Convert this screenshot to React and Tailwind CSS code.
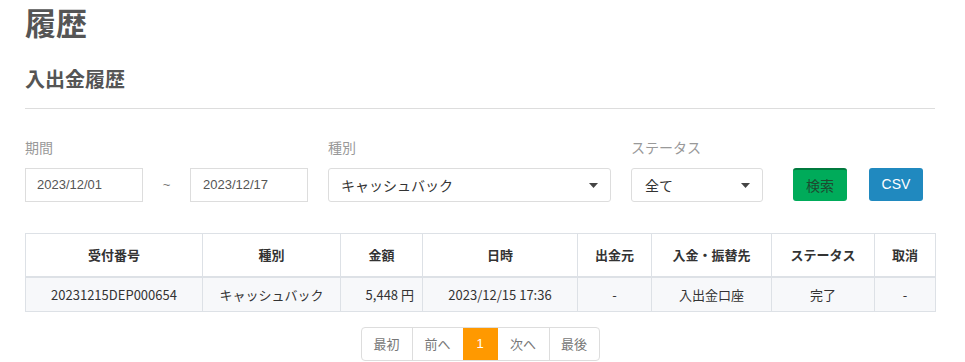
import React from "react";

const jp = { fontFamily: '"Noto Sans CJK JP", "Noto Sans", sans-serif' };
const latin = { fontFamily: '"Liberation Sans", "Noto Sans CJK JP", sans-serif' };

function Caret() {
  return (
    <svg width="9" height="5" viewBox="0 0 9 5" className="shrink-0">
      <path d="M0 0h9L4.5 5z" fill="#444" />
    </svg>
  );
}

const cols = [
  { label: "受付番号", w: "w-[177px]" },
  { label: "種別", w: "w-[138px]" },
  { label: "金額", w: "w-[82px]" },
  { label: "日時", w: "w-[155px]" },
  { label: "出金元", w: "w-[74px]" },
  { label: "入金・振替先", w: "w-[120px]" },
  { label: "ステータス", w: "w-[103px]" },
  { label: "取消", w: "w-[61px]" },
];

const rows = [
  ["20231215DEP000654", "キャッシュバック", "5,448 円", "2023/12/15 17:36", "-", "入出金口座", "完了", "-"],
];

export default function App() {
  return (
    <div className="w-[965px] h-[362px] overflow-hidden bg-white pl-[25px]" style={jp}>
      <div className="w-[910px]">
        <h1 className="text-[31px] leading-[44px] font-bold text-[#555]">履歴</h1>
        <h2 className="mt-[22px] text-[20px] leading-[26px] font-bold text-[#555] pb-[16px] border-b border-[#ddd]">入出金履歴</h2>

        <div className="mt-[28px] flex items-end">
          <div className="w-[303px] shrink-0">
            <p className="text-[14px] leading-[20px] text-[#999] mb-[11px]">期間</p>
            <div className="flex items-center">
              <div className="w-[118px] h-[34px] border border-[#ddd] flex items-center pl-[11px] text-[13px] text-[#555]" style={latin}>2023/12/01</div>
              <span className="w-[47px] text-center text-[13px] text-[#777]" style={latin}>~</span>
              <div className="w-[118px] h-[34px] border border-[#ddd] flex items-center pl-[12px] text-[13px] text-[#555]" style={latin}>2023/12/17</div>
            </div>
          </div>
          <div className="w-[303px] shrink-0">
            <p className="text-[14px] leading-[20px] text-[#999] mb-[11px]">種別</p>
            <div className="w-[283px] h-[34px] border border-[#ddd] rounded-[3px] flex items-center justify-between pl-[12px] pr-[12px] text-[14px] text-[#333]">
              <span>キャッシュバック</span>
              <Caret />
            </div>
          </div>
          <div className="w-[162px] shrink-0">
            <p className="text-[14px] leading-[20px] text-[#999] mb-[11px]">ステータス</p>
            <div className="w-[132px] h-[34px] border border-[#ddd] rounded-[3px] flex items-center justify-between pl-[13px] pr-[12px] text-[14px] text-[#333]">
              <span>全て</span>
              <Caret />
            </div>
          </div>
          <button className="w-[54px] h-[33px] mb-[1px] rounded-[3px] bg-[#00ab5a] border-t-2 border-[#007a3e] text-[14px] text-[#1e4a30]">検索</button>
          <button className="ml-[22px] w-[54px] h-[33px] mb-[1px] rounded-[3px] bg-[#2089bf] text-[14px] text-white" style={latin}>CSV</button>
        </div>

        <table className="mt-[31px] w-[910px] border-collapse table-fixed text-[13px] text-[#333]">
          <thead>
            <tr className="h-[43px] border-b-2 border-[#dde1e6]">
              {cols.map((c) => (
                <th key={c.label} className={`${c.w} border border-[#dde1e6] font-bold text-center`}>{c.label}</th>
              ))}
            </tr>
          </thead>
          <tbody>
            {rows.map((r, i) => (
              <tr key={i} className="h-[35px] bg-[#f7f8fa]">
                {r.map((cell, j) => (
                  <td key={j} className={`border border-[#dde1e6] ${j === 2 ? "text-right pr-[8px]" : "text-center"}`}>{cell}</td>
                ))}
              </tr>
            ))}
          </tbody>
        </table>

        <div className="mt-[15px] flex justify-center">
          <div className="flex h-[34px] border border-[#ddd] rounded-[4px] overflow-hidden text-[13px] text-[#777]">
            <span className="w-[50px] flex items-center justify-center">最初</span>
            <span className="w-[51px] flex items-center justify-center border-l border-[#ddd]">前へ</span>
            <span className="w-[35px] flex items-center justify-center bg-[#ff9900] text-white" style={latin}>1</span>
            <span className="w-[51px] flex items-center justify-center">次へ</span>
            <span className="w-[50px] flex items-center justify-center border-l border-[#ddd]">最後</span>
          </div>
        </div>
      </div>
    </div>
  );
}
